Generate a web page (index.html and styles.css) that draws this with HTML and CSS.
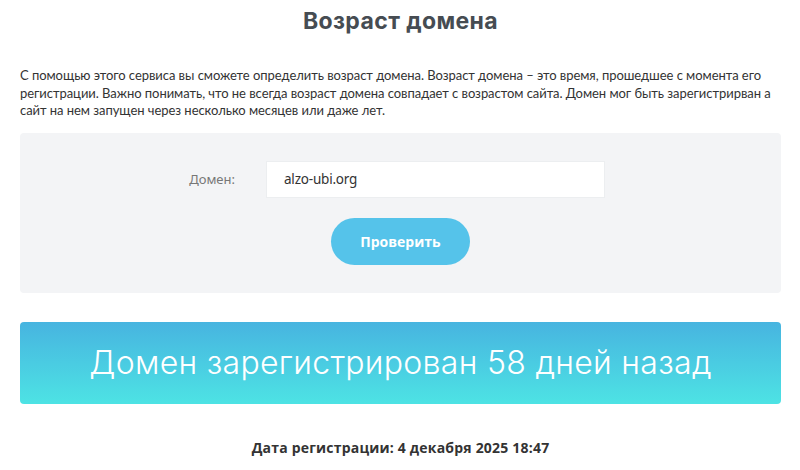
FILE: index.html
```html
<!DOCTYPE html>
<html lang="ru">
<head>
	<meta charset="UTF-8">
	<title>Возраст домена</title>
	<link rel="stylesheet" href="styles.css">
</head>
<body>
	<div class="page">
		<h1 class="title">Возраст домена</h1>

		<p class="intro">С помощью этого сервиса вы сможете определить возраст домена. Возраст домена – это время, прошедшее с момента его регистрации. Важно понимать, что не всегда возраст домена совпадает с возрастом сайта. Домен мог быть зарегистрирван а сайт на нем запущен через несколько месяцев или даже лет.</p>

		<!-- FORM -->
		<form class="check-form">
			<div class="form-row">
				<label class="form-label" for="domain">Домен:</label>
				<input class="form-input" id="domain" type="text" value="alzo-ubi.org">
			</div>
			<button class="check-btn" type="button">Проверить</button>
		</form>

		<!-- RESULT -->
		<div class="result">Домен зарегистрирован 58 дней назад</div>

		<p class="reg-date">Дата регистрации: 4 декабря 2025 18:47</p>
	</div>
</body>
</html>
```

FILE: styles.css
```css
* {
	margin: 0;
	padding: 0;
	box-sizing: border-box;
}

body {
	background: #fff;
	color: #333;
	font-family: 'Lato', sans-serif;
}

.page {
	padding: 0 19px 0 20px;
}

.title {
	font-family: 'Inter', sans-serif;
	font-weight: 700;
	font-size: 23px;
	letter-spacing: 0.4px;
	color: #464c52;
	text-align: center;
	line-height: 26px;
	padding-top: 8px;
}

.intro {
	margin-top: 33px;
	font-size: 13px;
	line-height: 17.5px;
	letter-spacing: -0.05px;
	color: #333;
}

/* FORM */
.check-form {
	margin-top: 13px;
	background: #f3f4f6;
	border-radius: 4px;
	height: 160px;
	display: flex;
	flex-direction: column;
	align-items: center;
	padding-top: 28px;
}

.form-row {
	display: flex;
	align-items: center;
	margin-right: 41px;
}

.form-label {
	font-family: 'Noto Sans', sans-serif;
	font-size: 13px;
	color: #777;
	width: 80px;
	margin-right: 31px;
	text-align: right;
}

.form-input {
	width: 339px;
	height: 37px;
	border: 1px solid #eceef0;
	background: #fff;
	padding: 0 17px;
	font-family: 'Noto Sans', sans-serif;
	font-size: 13.5px;
	letter-spacing: -0.2px;
	color: #333;
	outline: none;
}

.check-btn {
	margin-top: 20px;
	width: 139px;
	height: 47px;
	border: none;
	border-radius: 24px;
	background: #55c3ea;
	color: #fff;
	font-family: 'Open Sans', sans-serif;
	font-weight: 700;
	font-size: 14px;
	cursor: pointer;
}

/* RESULT */
.result {
	margin-top: 29px;
	height: 82px;
	border-radius: 4px;
	background: linear-gradient(to bottom, #47b4e0, #4de3e4);
	color: #fff;
	font-family: 'Inter', sans-serif;
	font-weight: 300;
	font-size: 32px;
	letter-spacing: 0.3px;
	display: flex;
	align-items: center;
	justify-content: center;
}

.reg-date {
	margin-top: 34px;
	text-align: center;
	font-family: 'Open Sans', sans-serif;
	font-weight: 700;
	font-size: 14px;
	letter-spacing: 0.2px;
	color: #333;
}
```
